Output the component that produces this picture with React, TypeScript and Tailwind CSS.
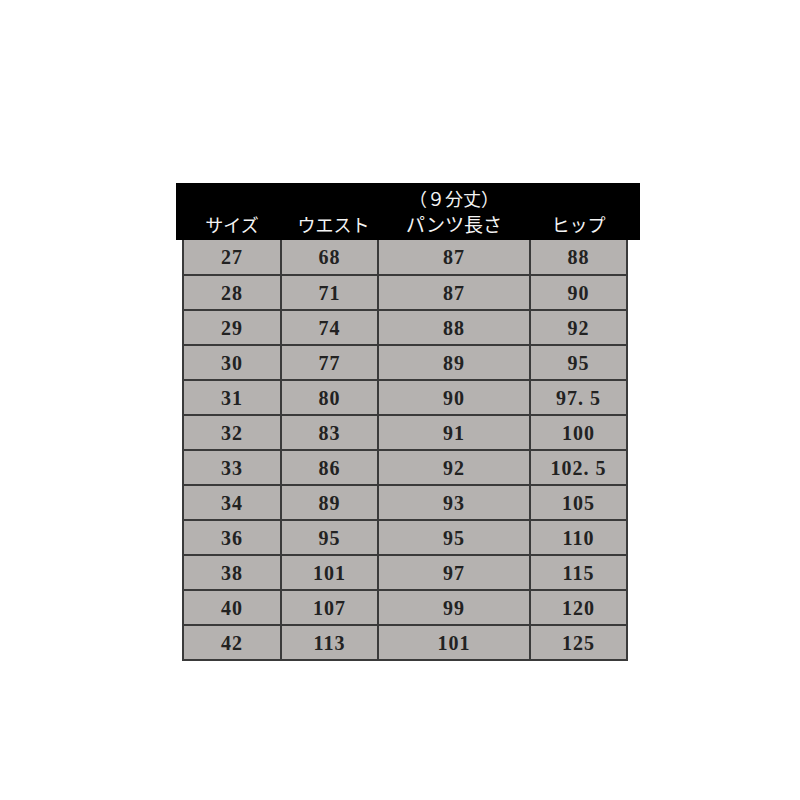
const rows: [string, string, string, string][] = [
  ['27', '68', '87', '88'],
  ['28', '71', '87', '90'],
  ['29', '74', '88', '92'],
  ['30', '77', '89', '95'],
  ['31', '80', '90', '97.5'],
  ['32', '83', '91', '100'],
  ['33', '86', '92', '102.5'],
  ['34', '89', '93', '105'],
  ['36', '95', '95', '110'],
  ['38', '101', '97', '115'],
  ['40', '107', '99', '120'],
  ['42', '113', '101', '125'],
];

const cols = 'grid grid-cols-[96px_95px_150px_95px] gap-x-[2px]';

export default function App() {
  return (
    <div className="w-[800px] h-[800px] bg-white pt-[183px] pl-[176px]">
      {/* header band */}
      <div
        className="w-[464px] h-[57px] bg-black text-[#f4f4f4] text-[18px] leading-[26px] pl-[8px] pb-[3px] flex items-end"
        style={{ fontFamily: '"Noto Sans CJK JP", "Noto Sans", sans-serif' }}
      >
        <div className={cols + ' w-[444px] items-end'}>
          <div className="text-center">サイズ</div>
          <div className="text-center pl-[8px]">ウエスト</div>
          <div className="text-center flex flex-col">
            <span>（９分丈）</span>
            <span className="text-[19px]">パンツ長さ</span>
          </div>
          <div className="text-center">ヒップ</div>
        </div>
      </div>

      {/* size table */}
      <div
        className="ml-[6px] w-[446px] bg-[#3a3a3a] px-[2px] pb-[2px] flex flex-col gap-y-[2px]"
        style={{ fontFamily: '"Liberation Serif", serif' }}
      >
        {rows.map((r, i) => (
          <div key={i} className={cols + (i === 0 ? ' h-[34px]' : ' h-[33px]')}>
            {r.map((v, j) => (
              <div
                key={j}
                className="bg-[#b5b2b0] flex items-center justify-center text-[20px] font-bold text-[#222] tracking-[1px]"
              >
                {v.replace('.', '. ')}
              </div>
            ))}
          </div>
        ))}
      </div>
    </div>
  );
}
